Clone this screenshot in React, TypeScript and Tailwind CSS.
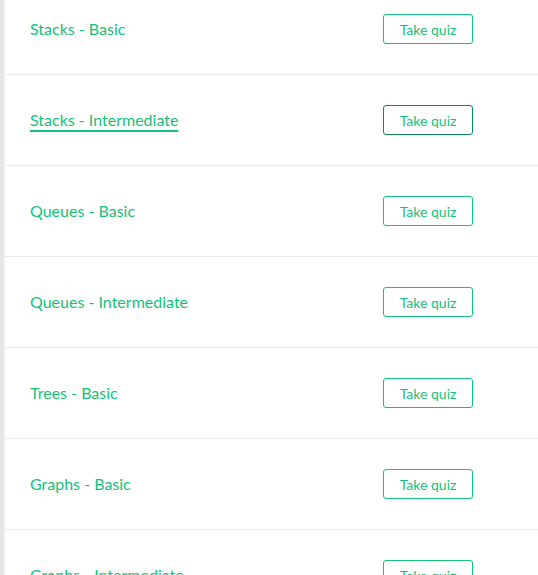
import React from "react";

const quizzes = [
    { name: "Stacks - Basic" },
    { name: "Stacks - Intermediate", active: true },
    { name: "Queues - Basic" },
    { name: "Queues - Intermediate" },
    { name: "Trees - Basic" },
    { name: "Graphs - Basic" },
    { name: "Graphs - Intermediate" },
];

export default function App() {
    return (
        <div className="flex h-[575px] w-[538px] overflow-hidden bg-white" style={{ fontFamily: "Lato, 'Open Sans', sans-serif" }}>
            <div className="w-[4px] shrink-0 bg-[#e6e6e6]" />
            <div className="w-px shrink-0 bg-[#f2f2f2]" />
            <div className="-mt-[16px] flex-1">
                {quizzes.map((q) => (
                    <div key={q.name} className="flex h-[91px] items-center justify-between border-b border-[#ececec] pl-[25px] pr-[65px]">
                        <a
                            href="#"
                            className={
                                q.active
                                    ? "text-[16px] text-[#14c17b] underline decoration-[#14c17b] decoration-2 underline-offset-[4px]"
                                    : "text-[16px] text-[#14c17b]"
                            }
                        >
                            {q.name}
                        </a>
                        <button
                            className={
                                q.active
                                    ? "h-[30px] w-[90px] rounded-[3px] border border-[#0f8a57] bg-white text-[14px] text-[#14c17b]"
                                    : "h-[30px] w-[90px] rounded-[3px] border border-[#14c17b] bg-white text-[14px] text-[#14c17b]"
                            }
                        >
                            Take quiz
                        </button>
                    </div>
                ))}
            </div>
        </div>
    );
}
